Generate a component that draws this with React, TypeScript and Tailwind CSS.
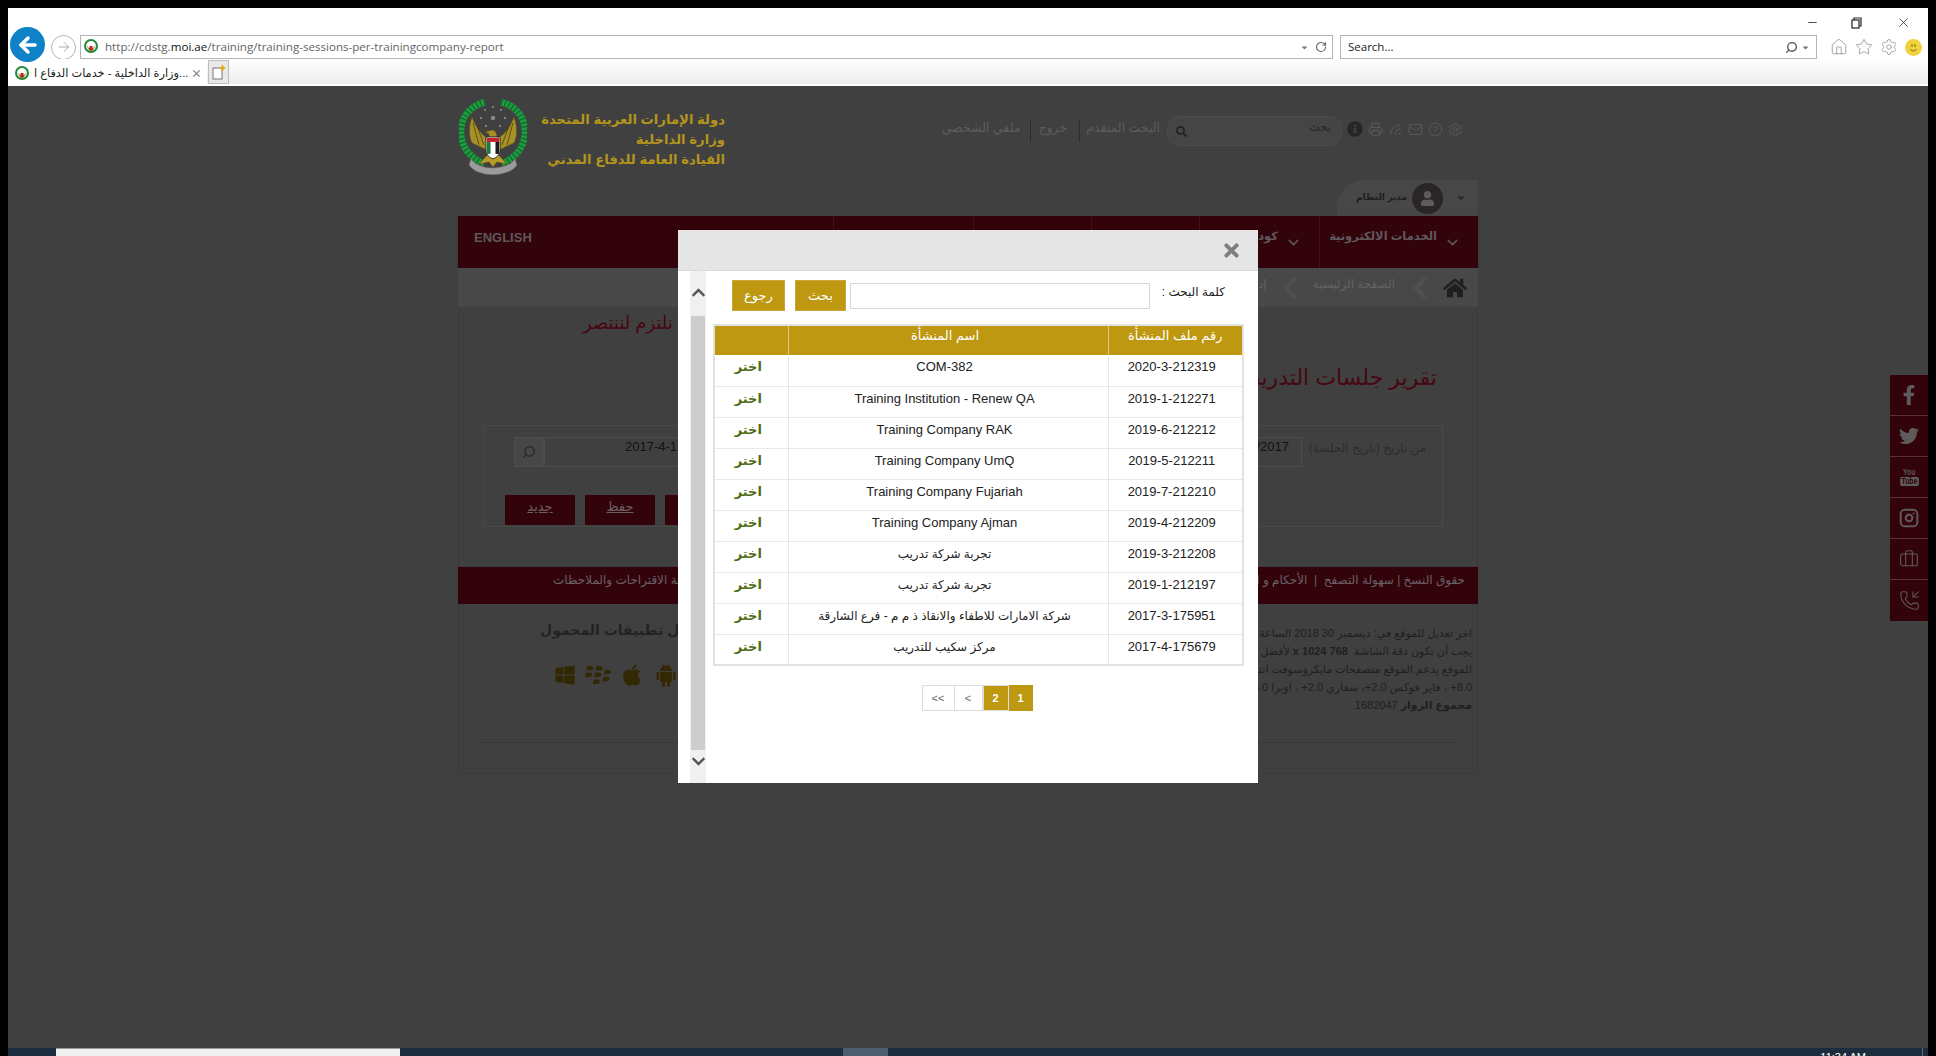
import React from "react";
import {
  ArrowLeft, ArrowRight, RotateCw, Search, Home, Star, Settings, X, Minus, Printer, Rss, Mail, CircleHelp, ChevronDown, ChevronLeft, Briefcase, PhoneIncoming, Instagram,
} from "lucide-react";
import { FaFacebookF, FaTwitter, FaHome, FaInfoCircle, FaUser, FaTimes, FaChevronUp, FaChevronDown, FaWindows, FaBlackberry, FaApple, FaSearch, FaCaretDown } from "react-icons/fa";

const rows: [string, string, boolean][] = [
  ["2020-3-212319", "COM-382", false],
  ["2019-1-212271", "Training Institution - Renew QA", false],
  ["2019-6-212212", "Training Company RAK", false],
  ["2019-5-212211", "Training Company UmQ", false],
  ["2019-7-212210", "Training Company Fujariah", false],
  ["2019-4-212209", "Training Company Ajman", false],
  ["2019-3-212208", "تجربة شركة تدريب", true],
  ["2019-1-212197", "تجربة شركة تدريب", true],
  ["2017-3-175951", "شركة الامارات للاطفاء والانقاذ ذ م م - فرع الشارقة", true],
  ["2017-4-175679", "مركز سكيب للتدريب", true],
];

function Emblem({ size = 68 }: { size?: number }) {
  return (
    <svg width={size} height={size * 1.16} viewBox="0 0 68 79">
      <path d="M26 3 C9 7 1 21 2 35 C3 49 12 59 25 65" fill="none" stroke="#1f9a3f" strokeWidth="6.5" />
      <path d="M42 3 C59 7 67 21 66 35 C65 49 56 59 43 65" fill="none" stroke="#1f9a3f" strokeWidth="6.5" />
      <path d="M26 3 C9 7 1 21 2 35 C3 49 12 59 25 65" fill="none" stroke="#0c5f27" strokeWidth="6.5" strokeDasharray="1 3" />
      <path d="M42 3 C59 7 67 21 66 35 C65 49 56 59 43 65" fill="none" stroke="#0c5f27" strokeWidth="6.5" strokeDasharray="1 3" />
      {[[34, 8], [26, 11], [42, 11], [22, 19], [46, 19], [34, 19], [27, 27], [41, 27]].map(([x, y], i) => (
        <circle key={i} cx={x} cy={y} r={i === 5 ? 2.2 : 1.1} fill="#8b8b8b" />
      ))}
      <path d="M34 54 L13 44 C9 36 10 26 13 18 C17 28 22 36 30 40 L30 35 L26 33 L33 31 C36 31 38 34 38 39 C46 36 51 28 55 18 C58 26 59 36 55 44 Z" fill="#a89028" stroke="#5a4c12" strokeWidth="0.6" />
      <path d="M14 24 L20 46 M18 27 L25 46 M54 24 L48 46 M50 27 L43 46" stroke="#4a3e10" strokeWidth="0.8" />
      <path d="M20 65 L34 50 L48 65 L38 63 L34 68 L30 63 Z" fill="#b79c2a" stroke="#5a4c12" strokeWidth="0.5" />
      <path d="M12 60 C20 72 48 72 56 60 L58 66 C50 79 18 79 10 66 Z" fill="#9c9c9c" stroke="#666" strokeWidth="0.5" />
      <path d="M27 38 H41 V52 C41 56 37 59 34 60 C31 59 27 56 27 52 Z" fill="#fff" stroke="#222" strokeWidth="1" />
      <rect x="28" y="39" width="12" height="4" fill="#c62026" />
      <rect x="36.5" y="43" width="3.5" height="12" fill="#1c1c1c" />
      <rect x="28" y="43" width="3.5" height="12" fill="#1b7a35" />
    </svg>
  );
}

function FavIcon() {
  return (
    <svg width="14" height="16" viewBox="0 0 14 16" className="shrink-0">
      <circle cx="7" cy="7" r="6" fill="#fff" stroke="#1f8a3a" strokeWidth="2" />
      <path d="M2 6 L7 14 L12 6 L9 9 H5 Z" fill="#8a6d1b" />
      <rect x="5.5" y="7" width="3" height="4" fill="#c62026" />
    </svg>
  );
}

function AndroidIcon() {
  return (
    <svg width="20" height="24" viewBox="0 0 20 24" fill="currentColor" className="ml-[12px]">
      <path d="M4 8 C4 4.5 7 2.5 10 2.5 C13 2.5 16 4.5 16 8 Z" />
      <path d="M6 1 L7.5 3.5 M14 1 L12.5 3.5" stroke="currentColor" strokeWidth="0.8" />
      <rect x="4" y="9" width="12" height="10" rx="1" />
      <rect x="0.5" y="9" width="2.6" height="8" rx="1.3" />
      <rect x="16.9" y="9" width="2.6" height="8" rx="1.3" />
      <rect x="6" y="18" width="3" height="6" rx="1.3" />
      <rect x="11" y="18" width="3" height="6" rx="1.3" />
    </svg>
  );
}

function BrowserChrome() {
  return (
    <div className="h-[78px] shrink-0 flex flex-col bg-white font-['Open_Sans','Noto_Sans',sans-serif]">
      <div className="h-[27px] pt-[2px] flex justify-end items-center text-[#222]">
        <Minus size={13} strokeWidth={1.5} className="mr-[32px]" />
        <svg width="11" height="12" viewBox="0 0 11 12" className="mr-[34px]" fill="none" stroke="#222" strokeWidth="1.2"><rect x="1" y="3" width="7" height="8" /><path d="M3 3 V1 H10 V9 H8" /></svg>
        <X size={15} strokeWidth={1.2} className="mr-[17px]" />
      </div>
      <div className="h-[24px] flex items-center">
        <div className="w-[35px] h-[35px] ml-[2px] -mt-[5px] rounded-full bg-[#0f81c6] flex items-center justify-center shrink-0 z-10">
          <ArrowLeft size={24} strokeWidth={3.5} color="#fff" />
        </div>
        <div className="w-[25px] h-[25px] ml-[6px] rounded-full border border-[#b5b5b5] flex items-center justify-center shrink-0">
          <ArrowRight size={16} strokeWidth={1.2} color="#999" />
        </div>
        <div className="ml-[4px] w-[1253px] h-[24px] border border-[#b4b4b4] flex items-center pl-[3px] pr-[5px]">
          <FavIcon />
          <span className="ml-[7px] text-[11.6px] text-[#666] whitespace-nowrap">http://cdstg.<span className="text-[#111]">moi.ae</span>/training/training-sessions-per-trainingcompany-report</span>
          <FaCaretDown size={9} color="#777" className="ml-auto" />
          <RotateCw size={12} strokeWidth={2.4} color="#666" className="ml-[6px]" />
        </div>
        <div className="ml-[7px] w-[477px] h-[24px] border border-[#b4b4b4] flex items-center pl-[7px] pr-[6px]">
          <span className="text-[11.5px] text-[#222]">Search...</span>
          <Search size={13} strokeWidth={2.5} color="#555" className="ml-auto -scale-x-100" />
          <FaCaretDown size={9} color="#777" className="ml-[3px]" />
        </div>
        <Home size={18} strokeWidth={1} color="#888" className="ml-[13px]" />
        <Star size={18} strokeWidth={1} color="#888" className="ml-[7px]" />
        <Settings size={18} strokeWidth={1} color="#888" className="ml-[7px]" />
        <div className="ml-[7px] w-[17px] h-[17px] rounded-full bg-[#f1d23c] flex items-center justify-center">
          <svg width="11" height="11" viewBox="0 0 11 11" fill="none" stroke="#7a6a10" strokeWidth="1"><path d="M4 2 V5 M7 2 V5 M2.5 7 C4 9.5 7 9.5 8.5 7" /></svg>
        </div>
      </div>
      <div className="h-[26px] flex items-end bg-gradient-to-b from-white to-[#ececec] border-b border-white">
        <div className="w-[199px] h-[24px] pt-[3px] bg-white flex items-center pl-[7px] pr-[5px]">
          <FavIcon />
          <span className="ml-[5px] text-[11.3px] text-[#222] whitespace-nowrap font-['Liberation_Sans','DejaVu_Sans',sans-serif]">وزارة الداخلية - خدمات الدفاع ا...</span>
          <X size={11} strokeWidth={2.6} color="#888" className="ml-auto shrink-0" />
        </div>
        <div className="ml-[1px] w-[21px] h-[24px] bg-[#e9e9e9] border border-[#bdbdbd] flex items-center justify-center">
          <svg width="14" height="16" viewBox="0 0 14 16"><rect x="1" y="4" width="9" height="11" fill="#fff" stroke="#777" /><path d="M10.5 0 L11.7 2.8 L14 4 L11.7 5.2 L10.5 8 L9.3 5.2 L7 4 L9.3 2.8 Z" fill="#e9a91c" /></svg>
        </div>
      </div>
    </div>
  );
}

function Header() {
  return (
    <div className="h-[130px] flex justify-between">
      <div className="flex pt-[13px] pl-[1px] h-[110px]">
        <Emblem />
        <div dir="rtl" className="w-[199px] ml-[-1px] mt-[11px] text-[13.2px] leading-[20px] font-bold text-[#b3941c] whitespace-nowrap">
          <div>دولة الإمارات العربية المتحدة</div>
          <div>وزارة الداخلية</div>
          <div>القيادة العامة للدفاع المدني</div>
        </div>
      </div>
      <div className="flex flex-col items-end">
        <div className="mt-[30px] h-[30px] flex items-center pr-[15px] text-[#5d5d5d] text-[12.5px]">
          <span className="-mt-[6px]">ملفي الشخصي</span>
          <div className="w-px h-[22px] bg-[#2d2d2d] ml-[10px]" />
          <span className="ml-[7px] -mt-[6px]">خروج</span>
          <div className="w-px h-[22px] bg-[#2d2d2d] ml-[12px]" />
          <span className="ml-[6px] mr-[7px] -mt-[6px]">البحث المتقدم</span>
          <div className="w-[175px] h-[30px] rounded-[12px] bg-[#454545] border border-[#4b4b4b] flex items-center justify-between pl-[8px] pr-[10px]">
            <FaSearch size={11} color="#222" />
            <span className="text-[11.5px] -mt-[7px] text-[#262626]">بحث</span>
          </div>
          <FaInfoCircle size={16} color="#262626" className="ml-[5px] -mt-[4px]" />
          <Printer size={15} strokeWidth={1.6} className="ml-[5px] -mt-[4px]" />
          <Rss size={15} strokeWidth={1.4} className="ml-[5px] -mt-[4px] -scale-x-100" />
          <Mail size={15} strokeWidth={1.4} className="ml-[5px] -mt-[4px]" />
          <CircleHelp size={15} strokeWidth={1.4} className="ml-[5px] -mt-[4px]" />
          <Settings size={15} strokeWidth={1.4} className="ml-[5px] -mt-[4px]" />
        </div>
        <div className="mt-[34px] w-[141px] h-[36px] rounded-tl-[28px] bg-[#474747] flex items-center pl-[19px]">
          <span className="w-[47px] text-[9px] font-bold text-[#1e1e1e] whitespace-nowrap">مدير النظام</span>
          <div className="ml-[9px] w-[31px] h-[31px] rounded-full bg-[#2a2626] flex items-center justify-center">
            <FaUser size={15} color="#5c5c5c" />
          </div>
          <FaCaretDown size={12} color="#2b2b2b" className="ml-[12px]" />
        </div>
      </div>
    </div>
  );
}

function Nav() {
  return (
    <div className="h-[52px] bg-[#33030c] flex text-[#5f585b] shadow-[0_1px_2px_#333] whitespace-nowrap">
      <div className="w-[375px] pl-[16px] pt-[12px] text-[13px] font-bold">ENGLISH</div>
      <div className="w-[140px] border-l border-[#45101a]" />
      <div className="w-[118px] border-l border-[#45101a]" />
      <div className="w-[108px] border-l border-[#45101a]" />
      <div className="w-[120px] border-l border-[#45101a] flex justify-end items-start pt-[12px] pr-[17px] text-[11.5px] font-bold">
        <span>كود</span>
        <ChevronDown size={17} className="mt-[6px] ml-[7px]" />
      </div>
      <div className="flex-1 border-l border-[#45101a] flex justify-end items-start pt-[12px] pr-[17px] text-[11.5px] font-bold">
        <span>الخدمات الالكترونية</span>
        <ChevronDown size={17} className="mt-[6px] ml-[7px]" />
      </div>
    </div>
  );
}

function Breadcrumb() {
  return (
    <div className="h-[39px] bg-[#484848] flex justify-end items-center pr-[11px] text-[#636363] text-[12px]">
      <span className="-mt-[8px] mr-[6px]">إد</span>
      <ChevronLeft size={34} strokeWidth={3} color="#505050" className="mr-[6px]" />
      <span className="-mt-[8px] mr-[8px]">الصفحة الرئيسية</span>
      <ChevronLeft size={34} strokeWidth={3} color="#505050" className="mr-[6px]" />
      <FaHome size={24} color="#1f1f1f" />
    </div>
  );
}

function MainContent() {
  return (
    <div className="h-[259px] border-x border-[#3a3a3a] flex flex-col">
      <div className="mt-[5px] ml-[124px] h-[22px] text-[18px] leading-[22px] text-[#470712] whitespace-nowrap">نلتزم لننتصر</div>
      <div dir="rtl" className="mt-[28px] pr-[40px] h-[32px] text-[22px] leading-[32px] text-[#470712]">تقرير جلسات التدريب</div>
      <div className="mt-[31px] ml-[24px] mr-[34px] h-[102px] border border-[#494949] flex flex-col pl-[30px] pr-[16px]">
        <div className="mt-[11px] h-[30px] flex items-center">
          <div className="w-[30px] h-[30px] bg-[#474747] border border-[#4c4c4c] flex items-center justify-center">
            <Search size={14} strokeWidth={2.5} color="#2b2b2b" className="-scale-x-100" />
          </div>
          <div className="w-[224px] h-[30px] border border-[#4c4c4c] text-[13px] leading-[17px] text-[#111] pl-[80px]">2017-4-1</div>
          <div className="ml-auto w-[228px] h-[30px] border border-[#4c4c4c] text-[13px] leading-[17px] text-[#111] text-right pr-[12px]">1/1/2017</div>
          <div dir="rtl" className="w-[124px] text-[12px] text-[#2c2c2c] -mt-[8px] whitespace-nowrap">من تاريخ (تاريخ الجلسة)</div>
        </div>
        <div className="mt-[28px] -ml-[9px] flex gap-[10px]">
          {["جديد", "حفظ", "بحث"].map((t) => (
            <div key={t} className="w-[70px] h-[30px] pb-[6px] bg-[#33030c] text-[#6d6063] text-[13px] underline flex items-center justify-center">{t}</div>
          ))}
        </div>
      </div>
    </div>
  );
}

function Footer() {
  return (
    <>
      <div className="h-[38px] bg-[#33030c] flex justify-between pt-[4px] pl-[95px] pr-[13px] text-[12px] text-[#6a6265] border-t border-[#3a3a3a]">
        <span dir="rtl">بوابة الاقتراحات والملاحظات</span>
        <span dir="rtl">حقوق النسخ | سهولة التصفح &nbsp;|&nbsp; الأحكام و الشروط</span>
      </div>
      <div className="h-[170px] border-x border-b border-[#3a3a3a] flex flex-col">
        <div className="h-[138px] flex justify-between">
          <div className="pl-[81px] pt-[16px] flex flex-col">
            <div dir="rtl" className="w-fit text-[14px] font-bold text-[#232323] whitespace-nowrap">تحميل تطبيقات المحمول</div>
            <div className="mt-[21px] flex items-center text-[#332804]">
              <FaWindows size={22} className="ml-[14px]" />
              <FaBlackberry size={26} className="ml-[9px]" />
              <FaApple size={24} className="ml-[9px]" />
              <AndroidIcon />
            </div>
          </div>
          <div dir="rtl" className="pr-[5px] pt-[20px] text-[11px] leading-[18px] text-[#1f1f1f] whitespace-nowrap">
            <div>اخر تعديل للموقع في: ديسمبر 30 2018 الساعة 30</div>
            <div>يجب أن تكون دقة الشاشة &nbsp;<b>768 x 1024</b> لأفضل عرض</div>
            <div>للموقع يدعم الموقع متصفحات مايكروسوفت انترنت</div>
            <div>8.0+ ، فاير فوكس 2.0+، سفاري 2.0+ ، اوبرا 6.0+</div>
            <div><b>مجموع الزوار</b> 1682047</div>
          </div>
        </div>
        <div className="mx-[20px] h-px bg-[#383838]" />
      </div>
    </>
  );
}

function Socials() {
  const cls = "h-[41px] border-b border-[#5a3038] last:border-b-0 flex items-center justify-center text-[#5f5a5b]";
  return (
    <div className="absolute right-0 top-[289px] w-[38px] bg-[#33030c] flex flex-col">
      <div className={cls}><FaFacebookF size={20} /></div>
      <div className={cls}><FaTwitter size={20} /></div>
      <div className={cls + " flex-col leading-none font-['Liberation_Sans_Narrow','Liberation_Sans',sans-serif]"}>
        <span className="text-[9px] font-bold scale-x-75">You</span>
        <span className="text-[9px] font-bold scale-x-75 bg-[#5f5a5b] text-[#33030c] rounded-[2px] px-[2px]">Tube</span>
      </div>
      <div className={cls}><Instagram size={20} strokeWidth={2.4} /></div>
      <div className={cls}><Briefcase size={20} strokeWidth={1.3} /></div>
      <div className={cls}><PhoneIncoming size={21} strokeWidth={1.2} /></div>
    </div>
  );
}

function Modal() {
  return (
    <div className="absolute left-[670px] top-[144px] w-[580px] h-[553px] bg-white flex flex-col">
      <div className="h-[41px] shrink-0 bg-[#e5e5e5] border-b border-[#d9d9d9] flex items-center justify-end pr-[16px]">
        <FaTimes size={21} color="#7e7e7e" />
      </div>
      <div className="flex-1 flex pl-[12px]">
        <div className="w-[16px] bg-[#f0f0f0] flex flex-col">
          <div className="h-[45px] flex items-center justify-center"><FaChevronUp size={15} color="#555" className="-mt-[2px]" /></div>
          <div className="h-[434px] bg-[#cdcdcd] mx-[1px]" />
          <div className="flex-1 flex items-start justify-center pt-[4px]"><FaChevronDown size={15} color="#555" /></div>
        </div>
        <div className="pl-[7px] w-[537px]">
          <div className="mt-[9px] h-[31px] flex items-start text-[13px]">
            <div className="ml-[19px] w-[53px] h-[31px] bg-[#bd9810] border border-[#c8a63a] text-white flex items-center justify-center">رجوع</div>
            <div className="ml-[10px] w-[51px] h-[31px] bg-[#bd9810] border border-[#c8a63a] text-white flex items-center justify-center">بحث</div>
            <div className="ml-[4px] mt-[3px] w-[300px] h-[26px] bg-white border border-[#d6d6d6]" />
            <div dir="rtl" className="ml-[10px] w-[65px] text-[12px] leading-[20px] text-[#222] mt-[2px]">كلمة البحث :</div>
          </div>
          <table className="mt-[13px] w-[529px] table-fixed border-collapse border-2 border-[#e2e2e2] text-[13px] leading-[18px] text-[#222]">
            <colgroup>
              <col className="w-[74px]" />
              <col className="w-[320px]" />
              <col className="w-[135px]" />
            </colgroup>
            <thead>
              <tr className="h-[30px] bg-[#bd9810] text-white">
                <th className="font-normal border-r border-[#dcc880]"></th>
                <th className="font-normal border-r border-[#dcc880] align-top pt-[1px] pr-[6px]">اسم المنشأة</th>
                <th className="font-normal align-top pt-[1px]">رقم ملف المنشأة</th>
              </tr>
            </thead>
            <tbody>
              {rows.map(([num, name, ar], i) => (
                <tr key={i} className="h-[31px] border-b border-[#e8e8e8]">
                  <td className="align-top pt-[3px] text-center font-bold text-[#4e6b12] border-r border-[#e8e8e8]"><span className="mr-[6px]">اختر</span></td>
                  <td dir="rtl" className={"align-top pt-[3px] text-center border-r border-[#e8e8e8] pr-[7px] " + (ar ? "text-[12px]" : "")}>{name}</td>
                  <td className="align-top pt-[3px] text-center pr-[7px]">{num}</td>
                </tr>
              ))}
            </tbody>
          </table>
          <div className="mt-[19px] pr-[2px] flex justify-center text-[11px]">
            <div className="w-[33px] h-[26px] border border-[#ddd] flex items-center justify-center text-[#666]">&lt;&lt;</div>
            <div className="w-[28px] h-[26px] border-y border-r border-[#ddd] flex items-center justify-center text-[#666]">&lt;</div>
            <div className="w-[26px] h-[26px] bg-[#bd9810] border border-[#ddd] flex items-center justify-center text-white font-bold">2</div>
            <div className="w-[24px] h-[26px] bg-[#bd9810] flex items-center justify-center text-white font-bold">1</div>
          </div>
        </div>
      </div>
    </div>
  );
}

export default function App() {
  return (
    <div className="w-[1936px] h-[1056px] overflow-hidden bg-black pt-[8px] pl-[8px] pr-[8px] font-['Liberation_Sans','DejaVu_Sans',sans-serif]">
      <div className="h-[1048px] flex flex-col">
        <BrowserChrome />
        <div className="relative flex-1 bg-[#404040] overflow-hidden">
          <div className="ml-[450px] w-[1020px] flex flex-col">
            <Header />
            <Nav />
            <Breadcrumb />
            <MainContent />
            <Footer />
          </div>
          <Socials />
          <Modal />
        </div>
        <div className="h-[8px] shrink-0 bg-[#1b2c3f] flex">
          <div className="w-[48px]" />
          <div className="w-[344px] bg-[#f0f0f0] border-t border-[#9a9a9a]" />
          <div className="ml-[443px] w-[45px] bg-[#4d5d6d]" />
          <div className="ml-[1px] flex-1 relative overflow-hidden border-r border-[#5c6b7a] mr-[5px]">
            <span className="absolute right-[56px] top-[3px] text-[11px] leading-[12px] text-white whitespace-nowrap">11:34 AM</span>
          </div>
        </div>
      </div>
    </div>
  );
}
